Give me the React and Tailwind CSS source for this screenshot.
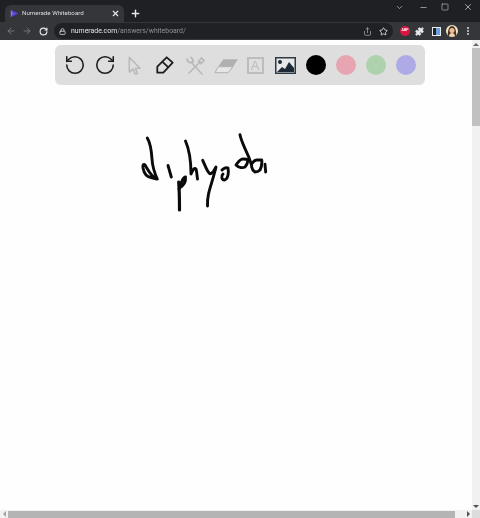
import {
  ArrowLeft,
  ArrowRight,
  ChevronDown,
  EllipsisVertical,
  Lock,
  Minus,
  Plus,
  Puzzle,
  RotateCcw,
  RotateCw,
  Share,
  Square,
  Star,
  X,
} from "lucide-react";

// --- Browser chrome ---
const TabBar = () => (
  <div className="flex h-[22px] items-end bg-[#1f2023] pl-[5px] text-[#d8d9db]">
    <div className="flex h-[17px] w-[119px] items-center rounded-t-[6px] bg-[#35363a] pl-[5px] pr-[4px]">
      <svg viewBox="0 0 12 12" className="h-[9px] w-[9px] shrink-0">
        <path d="M1 1l10 5-10 5 3-5z" fill="#5b45e0" />
        <path d="M1 1l3 5-3 5z" fill="#8f7bf5" />
      </svg>
      <span className="ml-[3px] flex-1 truncate text-[6.2px] text-[#dcdde0]">Numerade Whiteboard</span>
      <X size={9} strokeWidth={3} className="text-[#e8eaed]" />
    </div>
    <Plus size={11} strokeWidth={3} className="mb-[3px] ml-[6px] text-[#e8eaed]" />
    <div className="flex-1" />
    <div className="mb-[10px] flex items-center text-[#b9babd]">
      <ChevronDown size={9} className="mr-[15px]" />
      <Minus size={9} strokeWidth={2} className="mr-[13px]" />
      <Square size={8} strokeWidth={2} className="mr-[14px]" />
      <X size={10} strokeWidth={2} className="mr-[7px]" />
    </div>
  </div>
);

const AddressBar = () => (
  <div className="flex h-[18px] items-center bg-[#35363a] text-[#e3e4e6]">
    <ArrowLeft size={10} className="ml-[6px] text-[#7f8084]" />
    <ArrowRight size={10} className="ml-[6px] text-[#7f8084]" />
    <RotateCw size={9} strokeWidth={3} className="ml-[7px] text-[#e8eaed]" />
    <div className="ml-[6px] flex h-[16px] w-[339px] items-center rounded-full bg-[#202124] pl-[5px] pr-[5px]">
      <Lock size={7} strokeWidth={3} className="text-[#c9cacc]" />
      <span className="ml-[5px] flex-1 text-[6.9px]">
        numerade.com<span className="text-[#8f9094]">/answers/whiteboard/</span>
      </span>
      <Share size={9} className="text-[#a4a5a8]" />
      <Star size={9} strokeWidth={2.5} className="ml-[7px] text-[#d2d3d5]" />
    </div>
    <div className="ml-[7px] flex h-[10px] w-[10px] items-center justify-center rounded-full bg-[#d9163f] text-[3.5px] font-bold text-white">
      ABP
    </div>
    <Puzzle size={9} fill="#e8eaed" className="ml-[5px] text-[#e8eaed]" />
    <div className="ml-[8px] flex h-[9px] w-[9px] justify-end border border-[#e8eaed] bg-[#202124]">
      <div className="h-full w-[4px] bg-[#6d9fe0]" />
    </div>
    <svg viewBox="0 0 12 12" className="ml-[5px] h-[12px] w-[12px] shrink-0 rounded-full">
      <rect width="12" height="12" fill="#f1e6cc" />
      <path d="M2 12C1 4 4 1 6 1s5 3 4 11z" fill="#4c3320" />
      <circle cx="6" cy="5.500" r="2.500" fill="#eebd97" />
      <path d="M3 12c0-3 1.500-4 3-4s3 1 3 4z" fill="#f4d2b4" />
    </svg>
    <EllipsisVertical size={10} strokeWidth={3} className="ml-[5px] text-[#d4d5d7]" />
  </div>
);

// --- Whiteboard tools ---
const ToolButton = ({ children }) => (
  <div className="flex h-full w-[30px] shrink-0 items-center justify-center">{children}</div>
);

const ColorDot = ({ className }) => (
  <ToolButton>
    <div className={`h-[20px] w-[20px] rounded-full ${className}`} />
  </ToolButton>
);

const Toolbar = () => (
  <div className="ml-[55px] mt-[5px] flex h-[40px] w-[370px] rounded-[6px] bg-[#dedede] pl-[5px] pr-[4px]">
    <ToolButton>
      <RotateCcw size={22} strokeWidth={1.7} className="text-[#1e1e1e]" />
    </ToolButton>
    <ToolButton>
      <RotateCw size={22} strokeWidth={1.7} className="text-[#1e1e1e]" />
    </ToolButton>
    <ToolButton>
      <svg viewBox="0 0 20 20" className="h-[20px] w-[20px]" fill="none" stroke="#bababa" strokeWidth="1.600" strokeLinejoin="round">
        <path d="M4.300 2.300 15 13.300h-4.500l2 5.200-2.500.5-1.700-5-4 3z" />
      </svg>
    </ToolButton>
    <ToolButton>
      <svg viewBox="0 0 20 20" className="h-[20px] w-[20px]" fill="none" stroke="#1e1e1e" strokeWidth="1.800" strokeLinejoin="round">
        <path d="M2.300 17.700v-6L11.700 2.300l6 5.400-9.400 10z" />
        <path d="M7.300 6.700l6 5.600" />
      </svg>
    </ToolButton>
    <ToolButton>
      <svg viewBox="0 0 20 20" className="h-[20px] w-[20px]" fill="none" stroke="#bababa" strokeWidth="1.700" strokeLinecap="round">
        <path d="M6 7l11 12M15 7 4 18" />
        <path d="M2 4c.5 3 3 4.500 6 3 .5-1.500 0-3-2-4.500" />
        <path d="M13.500 6.500 16.500 3l2.500 2.500-3 3z" />
      </svg>
    </ToolButton>
    <ToolButton>
      <svg viewBox="0 0 28 20" className="h-[20px] w-[28px] shrink-0">
        <path d="M12.300 4.300H27l-5 7.400H7.300z" fill="#b0b0b0" />
        <path d="M7.300 11.700H22l-5 6H4z" fill="#e6e6e6" stroke="#b0b0b0" />
      </svg>
    </ToolButton>
    <ToolButton>
      <div className="flex h-[17px] w-[17px] items-center justify-center border-2 border-[#bdbdbd] font-['Liberation_Sans',sans-serif] text-[13px] leading-none text-[#bdbdbd]">
        A
      </div>
    </ToolButton>
    <ToolButton>
      <svg viewBox="0 0 21 17" className="ml-[1px] h-[17px] w-[21px]">
        <rect x="0.750" y="0.750" width="19.500" height="15.500" fill="#e8e8e8" stroke="#2d3a45" strokeWidth="1.500" />
        <circle cx="5" cy="5" r="2" fill="#1d2a36" />
        <path d="M2 15l5-5 3 2 4-7 5 6v4z" fill="#1d2a36" />
      </svg>
    </ToolButton>
    <div className="ml-[1px] flex h-full">
      <ColorDot className="bg-black" />
      <ColorDot className="bg-[#e6a5b0]" />
      <ColorDot className="bg-[#aed2ae]" />
      <ColorDot className="bg-[#aeaae6]" />
    </div>
  </div>
);

// --- Handwriting, coordinates follow the strokes in the picture ---
const Handwriting = () => (
  <svg
    viewBox="0 0 132 80"
    fill="none"
    stroke="#0a0a0a"
    strokeWidth="2.900"
    strokeLinecap="round"
    strokeLinejoin="round"
    className="absolute left-[138px] top-[92px] h-[80px] w-[132px]"
  >
    <path d="M9.300 6C13 12 13.500 20 14 27c.5 8 3 15 5.300 20C14 46 10 38 7 33c-1.500-1.500-2.500 0-2 3 1 5 4 9 8 9.500L19 47" />
    <path d="M30 33.500 33.300 45" />
    <path d="M40.700 50c.8 10 .8 20 .8 28" strokeWidth="3.200" />
    <path d="M41 57c2-6 4-12 6.500-12 .5 5-2.500 9-6 11" />
    <path d="M47.500 9C51 17 53 28 53 42c2-4 3-7 5-5 1 3 1 7 1.500 10" />
    <path d="M64.700 28.300C67 33 69 40 72 41.700c2.500.3 4.500-3.700 6-6.700-2 9-6 20-7.500 27-1 5-1.200 9-1 12" />
    <path d="M84 38c2-2 5-3 6-2 1 5 0 11-3.500 12-3 0-3.500-4-1.500-6" />
    <path d="M98 33c2-3 4-6 7-6 2 0 4 0 5 1-.5 4-2 6-3 7-2 1-6 1-9-2z" />
    <path d="M102 2.700c1 5 3 9 5 14 2.500 5 5 11 6.700 17" />
    <path d="M113.700 31.700c1.500-2 3.500-3.700 5-3.700 2 0 4 0 5 0 .5 4-.7 8-1.700 10-2 2-4 2-5 2-1.500-1-3-3-3.300-5" />
    <path d="M127 32.300l.7 7.700" />
  </svg>
);

// --- Scrollbars ---
const VerticalScrollbar = () => (
  <div className="flex w-[8px] flex-col items-center bg-[#f1f1f1]">
    <div className="flex h-[8px] items-center justify-center">
      <div className="h-0 w-0 border-x-[3px] border-b-[3px] border-x-transparent border-b-[#666666]" />
    </div>
    <div className="h-[78px] w-full bg-[#c1c1c1]" />
    <div className="flex-1" />
    <div className="flex h-[8px] items-center justify-center">
      <div className="h-0 w-0 border-x-[3px] border-t-[3px] border-x-transparent border-t-[#505050]" />
    </div>
  </div>
);

const HorizontalScrollbar = () => (
  <div className="flex h-[8px] items-center bg-[#f1f1f1]">
    <div className="flex w-[8px] justify-center">
      <div className="h-0 w-0 border-y-[3px] border-r-[3px] border-y-transparent border-r-[#a3a3a3]" />
    </div>
    <div className="h-[7px] w-[447px] bg-[#b4b4b4]" />
    <div className="flex-1" />
    <div className="flex w-[8px] justify-center">
      <div className="h-0 w-0 border-y-[3px] border-l-[3px] border-y-transparent border-l-[#505050]" />
    </div>
    <div className="h-full w-[8px] bg-[#dcdcdc]" />
  </div>
);

export default function App() {
  return (
    <div className="flex h-[518px] w-[480px] flex-col overflow-hidden bg-white font-['Roboto',sans-serif] blur-[0.3px]">
      <TabBar />
      <AddressBar />
      <div className="flex min-h-0 flex-1">
        <main className="relative flex-1 bg-[#fefefe]">
          <Toolbar />
          <Handwriting />
        </main>
        <VerticalScrollbar />
      </div>
      <HorizontalScrollbar />
    </div>
  );
}
